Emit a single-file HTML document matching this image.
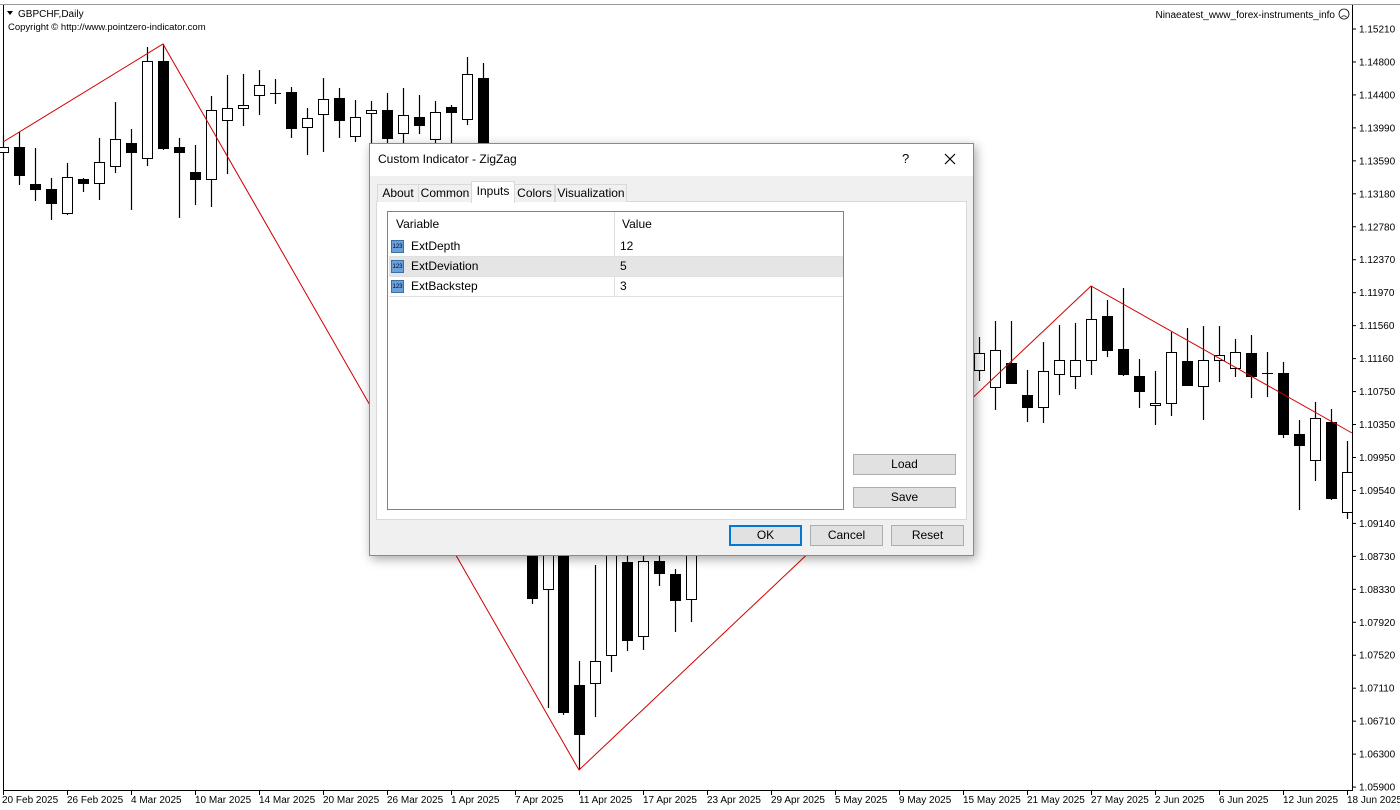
<!DOCTYPE html>
<html><head><meta charset="utf-8"><style>
body{margin:0;width:1400px;height:810px;background:#fff;overflow:hidden;font-family:"Liberation Sans",sans-serif;position:relative}
svg{position:absolute;left:0;top:0}
.dlg{position:absolute;left:369px;top:143px;width:603px;height:411px;background:#f0f0f0;border:1px solid #8a8a8a;box-shadow:2px 3px 10px rgba(0,0,0,.35);font-size:12px;color:#000}
.tb{position:absolute;left:0;top:0;right:0;height:32px;background:#fff}
.abs{position:absolute}
.tab{position:absolute;top:40px;height:17px;border:1px solid #d9d9d9;border-bottom:none;background:#f0f0f0;line-height:17px;text-align:center;font-size:12px}
.btn{position:absolute;background:#e1e1e1;border:1px solid #adadad;text-align:center;font-size:12px;line-height:19px;height:19px}
.row{position:absolute;left:1px;width:454px;height:19px;border-bottom:1px solid #e0e0e0;line-height:19px}
.ic{position:absolute;left:2px;top:3px;width:13px;height:13px;background:#6aa1d8;border:1px solid #3b6fa8;font-size:6px;color:#003;line-height:13px;text-align:center;box-sizing:border-box}
</style></head><body>
<svg id="c" width="1400" height="810" xmlns="http://www.w3.org/2000/svg" font-family="Liberation Sans, sans-serif" font-size="10">
<line x1="0" y1="4.5" x2="1400" y2="4.5" stroke="#9a9a9a"/>
<line x1="3.5" y1="5" x2="3.5" y2="790" stroke="#000"/>
<line x1="1352.5" y1="5" x2="1352.5" y2="790" stroke="#000"/>
<line x1="3" y1="790.5" x2="1353" y2="790.5" stroke="#000"/>
<g id="cd"></g>
<polyline points="3,142 163,44 579,770 1091,286 1352,433" fill="none" stroke="#d00000" stroke-width="1"/>
<g id="ax"></g>
<path d="M7 11 L13 11 L10 15 Z" fill="#000"/>
<text x="18" y="17" font-size="10">GBPCHF,Daily</text>
<text x="8" y="30" font-size="9.5">Copyright © http://www.pointzero-indicator.com</text>
<text x="1335" y="18" font-size="10" text-anchor="end">Ninaeatest_www_forex-instruments_info</text>
<circle cx="1344" cy="14" r="5" fill="none" stroke="#000" stroke-width=".8"/>
<path d="M1341.5 17 Q1344 14.5 1346.5 17" fill="none" stroke="#000" stroke-width=".8"/>
</svg>
<div class="dlg">
 <div class="tb"><span class="abs" style="left:8px;top:8px;font-size:12px">Custom Indicator - ZigZag</span>
 <span class="abs" style="left:532px;top:7px;font-size:13px">?</span>
 <svg style="left:574px;top:9px" width="12" height="12"><path d="M1 1L11 11M11 1L1 11" stroke="#000" stroke-width="1.2"/></svg></div>
 <div class="abs" style="left:6px;top:57px;width:589px;height:317px;background:#fff;border:1px solid #d9d9d9"></div>
 <div class="tab" style="left:7px;width:40px">About</div>
 <div class="tab" style="left:48px;width:52px">Common</div>
 <div class="tab" style="left:101px;top:37px;height:21px;width:42px;background:#fff;line-height:19px">Inputs</div>
 <div class="tab" style="left:144px;width:39px">Colors</div>
 <div class="tab" style="left:185px;width:70px">Visualization</div>
 <div class="abs" style="left:17px;top:67px;width:455px;height:297px;background:#fff;border:1px solid #828282">
  <div class="row" style="top:1px;height:23px;line-height:23px;border-bottom:none"><span class="abs" style="left:7px">Variable</span><span class="abs" style="left:233px">Value</span></div>
  <div class="abs" style="left:226px;top:0;width:1px;height:85px;background:#e0e0e0"></div>
  <div class="row" style="top:25px"><div class="ic">123</div><span class="abs" style="left:22px">ExtDepth</span><span class="abs" style="left:231px">12</span></div>
  <div class="row" style="top:45px;background:#e5e5e5"><div class="ic">123</div><span class="abs" style="left:22px">ExtDeviation</span><span class="abs" style="left:231px">5</span></div>
  <div class="row" style="top:65px"><div class="ic">123</div><span class="abs" style="left:22px">ExtBackstep</span><span class="abs" style="left:231px">3</span></div>
 </div>
 <div class="btn" style="left:483px;top:310px;width:101px">Load</div>
 <div class="btn" style="left:483px;top:343px;width:101px">Save</div>
 <div class="btn" style="left:359px;top:381px;width:69px;border:2px solid #0078d7;line-height:17px;height:17px">OK</div>
 <div class="btn" style="left:440px;top:381px;width:71px">Cancel</div>
 <div class="btn" style="left:521px;top:381px;width:71px">Reset</div>
</div>
<script>
var C=[[3,135,147,152,160,0],[19,132,147,175,185,1],[35,148,184,189,201,1],[51,178,189,203,220,1],[67,163,177,213,215,0],[83,178,179,183,192,1],[99,138,162,183,200,0],[115,102,139,166,173,0],[131,129,143,152,210,1],[147,47,61,158,166,0],[163,44,61,148,150,1],[179,138,147,152,218,1],[195,145,172,179,205,1],[211,96,110,179,207,0],[227,75,108,120,174,0],[243,74,105,108,126,0],[259,70,85,95,115,0],[275,79,93,93,104,0],[291,87,92,128,138,1],[307,108,118,127,155,0],[323,78,99,114,152,0],[339,88,98,120,138,1],[355,100,117,136,142,0],[371,101,110,113,145,0],[387,93,110,138,145,1],[403,88,115,133,145,0],[419,95,117,125,134,1],[435,101,112,139,145,0],[451,105,107,112,145,1],[467,57,74,119,125,0],[483,63,78,150,160,1],
[532,540,550,598,604,1],[548,540,550,589,708,0],[563,540,550,712,715,1],[579,661,685,734,770,1],[595,565,661,683,717,0],[611,540,550,655,672,0],[627,540,562,640,651,1],[643,540,561,636,650,0],[659,540,561,573,586,1],[675,569,574,600,632,1],[691,540,550,599,622,0],
[979,337,353,370,381,0],[995,321,350,387,410,0],[1011,321,363,383,384,1],[1027,370,395,407,422,1],[1043,342,371,407,423,0],[1059,325,360,374,395,0],[1075,323,360,376,389,0],[1091,286,319,360,375,0],[1107,300,316,350,357,1],[1123,288,349,374,376,1],[1139,359,376,391,408,1],[1155,371,403,405,425,0],[1171,332,352,403,416,0],[1187,328,361,385,386,1],[1203,326,360,386,420,0],[1219,326,355,360,382,0],[1235,339,352,368,377,0],[1251,335,353,376,398,1],[1267,352,373,373,397,0],[1283,362,373,434,438,1],[1299,420,434,445,510,1],[1315,402,418,460,481,0],[1331,409,422,498,500,1],[1347,441,472,512,519,0]];
var s='';C.forEach(function(c){var x=c[0];s+='<line x1="'+(x+.5)+'" y1="'+c[1]+'" x2="'+(x+.5)+'" y2="'+c[4]+'" stroke="#000" stroke-width="1.2"/>';
if(c[3]-c[2]<1)s+='<line x1="'+(x-5)+'" y1="'+(c[2]+.5)+'" x2="'+(x+6)+'" y2="'+(c[2]+.5)+'" stroke="#000"/>';
else s+='<rect x="'+(x-4.5)+'" y="'+(c[2]+.5)+'" width="10" height="'+(c[3]-c[2])+'" fill="'+(c[5]?'#000':'#fff')+'" stroke="#000"/>';});
document.getElementById('cd').innerHTML=s;
var P=['1.15210','1.14800','1.14400','1.13990','1.13590','1.13180','1.12780','1.12370','1.11970','1.11560','1.11160','1.10750','1.10350','1.09950','1.09540','1.09140','1.08730','1.08330','1.07920','1.07520','1.07110','1.06710','1.06300','1.05900'];
var a='';P.forEach(function(p,i){var y=29+i*32.96;a+='<line x1="1352" y1="'+y+'" x2="1356" y2="'+y+'" stroke="#000"/><text x="1359" y="'+(y+3.5)+'">'+p+'</text>';});
var D=['20 Feb 2025','26 Feb 2025','4 Mar 2025','10 Mar 2025','14 Mar 2025','20 Mar 2025','26 Mar 2025','1 Apr 2025','7 Apr 2025','11 Apr 2025','17 Apr 2025','23 Apr 2025','29 Apr 2025','5 May 2025','9 May 2025','15 May 2025','21 May 2025','27 May 2025','2 Jun 2025','6 Jun 2025','12 Jun 2025','18 Jun 2025'];
D.forEach(function(d,i){var x=3+i*64;a+='<line x1="'+(x+.5)+'" y1="790" x2="'+(x+.5)+'" y2="795" stroke="#000"/><text x="'+(i==0?2:x)+'" y="803">'+d+'</text>';});
document.getElementById('ax').innerHTML=a;
</script>
</body></html>
